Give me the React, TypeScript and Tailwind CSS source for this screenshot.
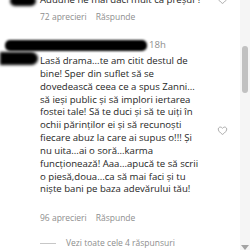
function Heart({ className }: { className?: string }) {
  return (
    <svg viewBox="0 0 24 24" className={className} fill="none" stroke="#8e8e8e" strokeWidth="1.6">
      <path d="M12 20.5s-7.5-4.6-9-9.6C2 7.3 4.3 4.5 7.3 4.5c2 0 3.5 1.1 4.7 2.8 1.2-1.7 2.7-2.8 4.7-2.8 3 0 5.3 2.8 4.3 6.4-1.5 5-9 9.6-9 9.6z" />
    </svg>
  )
}

const lines = [
  'Lasă drama...te am citit destul de',
  'bine! Sper din suflet să se',
  'dovedească ceea ce a spus Zanni...',
  'să ieși public și să implori iertarea',
  'fostei tale! Să te duci și să te uiți în',
  'ochii părinților ei și să recunoști',
  'fiecare abuz la care ai supus o!!! Și',
  'nu uita...ai o soră...karma',
  'funcționează! Aaa...apucă te să scrii',
  'o piesă,doua...ca să mai faci și tu',
  'niște bani pe baza adevărului tău!',
]

export default function App() {
  return (
    <div className="w-[250px] h-[250px] overflow-hidden bg-white flex font-['Open_Sans',sans-serif] text-[#262626]">
      <div className="w-[240px] relative">
        <div className="-mt-[7px]">
          {/* tail of previous comment */}
          <div className="flex items-center h-[13px]">
            <div className="w-[40px] h-[13px] flex items-end pl-[10px]">
              <div className="w-[26px] h-[10px] bg-black rounded-full blur-[1.5px]" />
            </div>
            <p className="text-[9.6px] leading-[13px] whitespace-nowrap">Aduüne ne mai daci mult ca preșul ?</p>
            <Heart className="w-[11px] h-[11px] ml-auto mr-[12px]" />
          </div>
          <div className="flex gap-[9px] pl-[40px] mt-[5px] text-[8.5px] leading-[12px] text-[#8e8e8e]">
            <span>72 aprecieri</span>
            <span>Răspunde</span>
          </div>

          {/* comment */}
          <div className="mt-[16px] flex items-center h-[12px]">
            <div className="w-[142px] ml-[5px] h-[11px] bg-black rounded-[5px] blur-[1px]" />
            <span className="ml-[2px] text-[9.6px] text-[#8e8e8e]">18h</span>
          </div>
          <div className="flex">
            <div className="w-[40px] pt-[1px]">
              <div className="w-[38px] h-[13px] bg-black rounded-r-full rounded-l-[4px] blur-[1.5px]" />
            </div>
            <div className="text-[9.6px] leading-[12.85px] whitespace-nowrap pt-[4px]">
              {lines.map((l) => (
                <p key={l}>{l}</p>
              ))}
            </div>
          </div>
          <div className="absolute left-[217px] top-[125px]">
            <Heart className="w-[11px] h-[11px]" />
          </div>
          <div className="flex gap-[9px] pl-[40px] mt-[16px] text-[8.5px] leading-[12px] text-[#8e8e8e]">
            <span>96 aprecieri</span>
            <span>Răspunde</span>
          </div>
          <div className="flex items-center pl-[40px] mt-[13px] text-[8.5px] leading-[12px] text-[#8e8e8e]">
            <div className="w-[16px] h-px bg-[#c7c7c7]" />
            <span className="ml-[10px]">Vezi toate cele 4 răspunsuri</span>
          </div>
        </div>
      </div>
      <div className="w-[10px] bg-[#f5f5f5] flex flex-col items-center">
        <div className="mt-[46px] w-[6px] h-[47px] rounded-full bg-[#c1c1c1]" />
        <div className="mt-auto w-0 h-0 border-l-[4px] border-r-[4px] border-t-[5px] border-l-transparent border-r-transparent border-t-[#a3a3a3]" />
      </div>
    </div>
  )
}
